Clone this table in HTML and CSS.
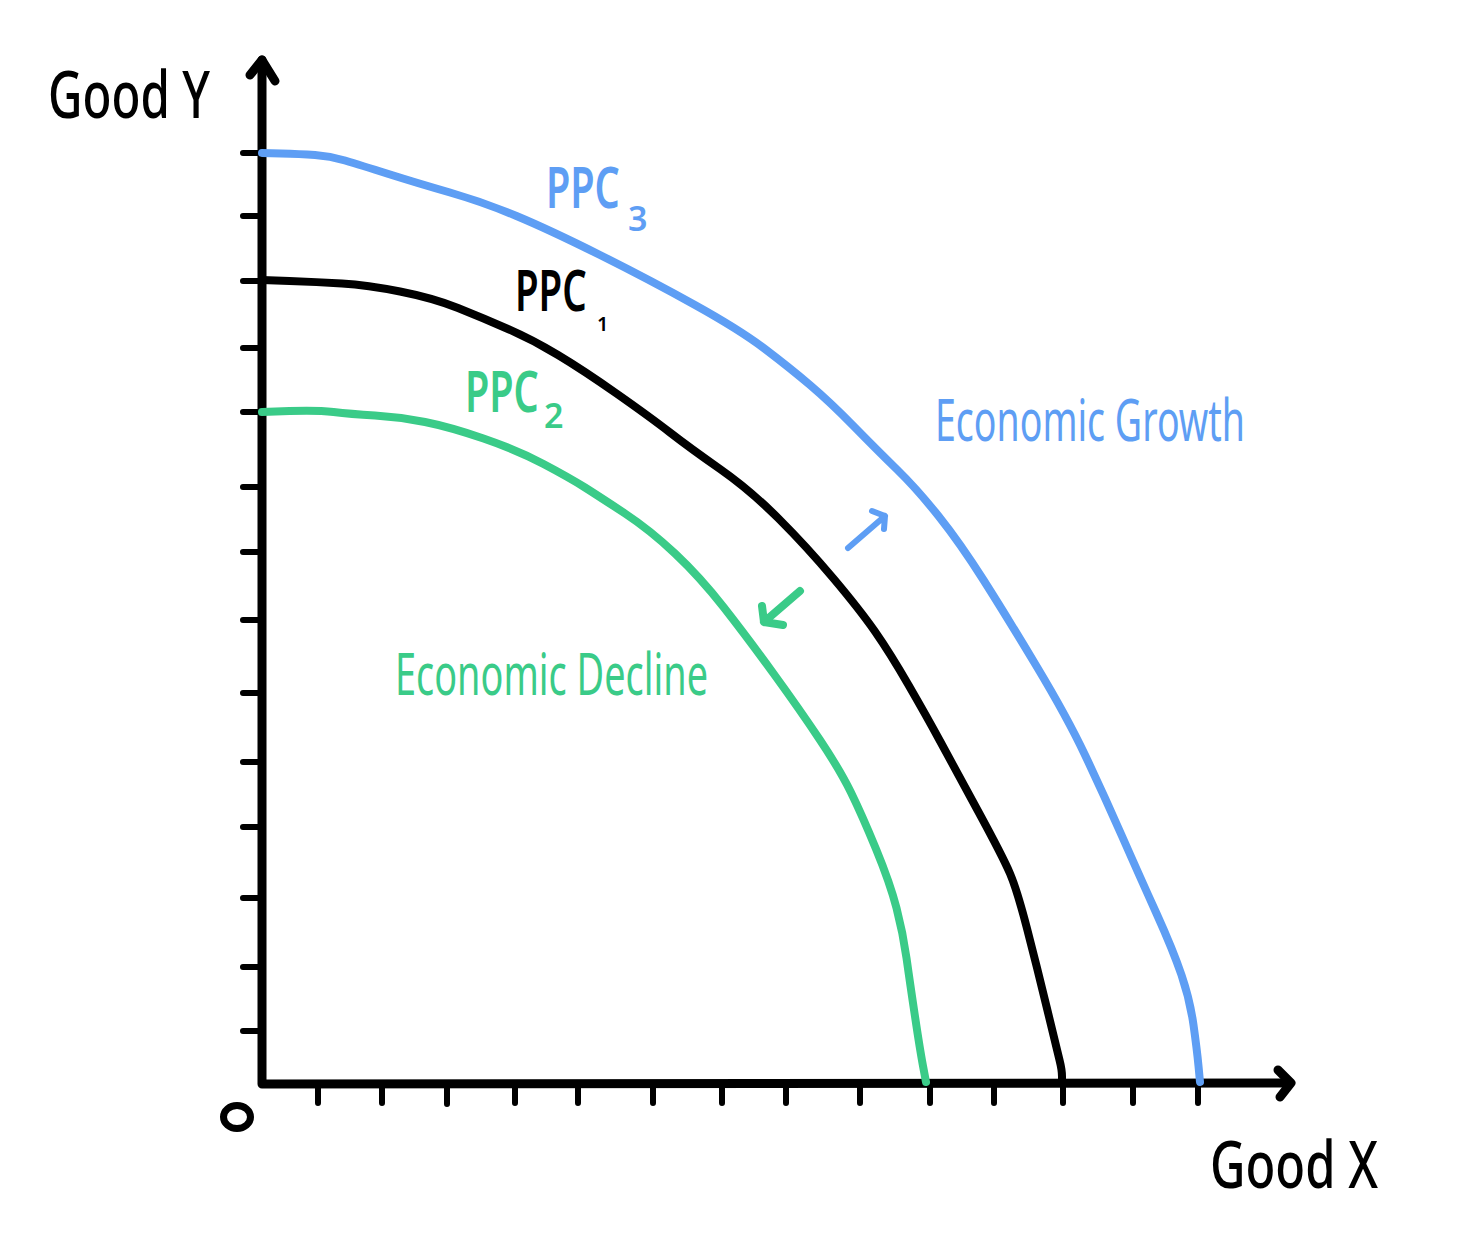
FILE: index.html
```html
<!DOCTYPE html>
<html lang="en">
<head>
<meta charset="utf-8">
<title>Production Possibility Curve</title>
<link rel="stylesheet" href="styles.css">
</head>
<body>
<main class="page">
<svg class="chart" width="1463" height="1253" viewBox="0 0 1463 1253" xmlns="http://www.w3.org/2000/svg">
  <!-- axes -->
  <g class="axis">
    <path d="M262 60 L262 1084 L1290 1083"/>
    <path d="M250 75 L262 60 L275 81"/>
    <path d="M1278 1070 L1291 1083 L1280 1097"/>
  </g>
  <g class="ticks">
    <path d="M243 153 H262 M243 216 H262 M243 281 H262 M243 348 H262 M243 412 H262 M243 487 H262 M243 552 H262 M243 620 H262 M243 693 H262 M243 762 H262 M243 827 H262 M243 898 H262 M243 967 H262 M243 1031 H262"/>
    <path d="M318 1084 V1103 M382 1084 V1103 M447 1084 V1104 M515 1084 V1103 M578 1084 V1103 M653 1084 V1103 M722 1084 V1103 M786 1084 V1103 M860 1084 V1103 M930 1084 V1103 M994 1084 V1103 M1063 1084 V1103 M1133 1084 V1103 M1198 1084 V1103"/>
  </g>
  <ellipse class="origin" cx="237" cy="1117" rx="13.5" ry="11.5"/>

  <!-- curves -->
  <path class="curve blue" d="M262 153 L281 153.5 Q300 154 315 155 Q330 156 345 160.5 Q360 165 388.5 174 Q417 183 450 192.5 Q483 202 516.5 216 Q550 230 600 255 Q650 280 695 305 Q740 330 765 349 Q790 368 810 385 Q830 402 853.5 426 Q877 450 897 469.5 Q917 489 938.5 516 Q960 543 983.5 580 Q1007 617 1037 667 Q1067 717 1085 755 Q1103 793 1121.5 835 Q1140 877 1156.5 913.5 Q1173 950 1181.5 975 Q1190 1000 1193.5 1025 Q1197 1050 1198.5 1066 L1200 1082"/>
  <path class="curve black" d="M262 280 L289.5 281 Q317 282 342 283.5 Q367 285 400 291.5 Q433 298 458 308 Q483 318 508 329 Q533 340 558 355 Q583 370 616.5 393.5 Q650 417 670 432.5 Q690 448 720 469 Q750 490 778.5 518.5 Q807 547 833.5 578.5 Q860 610 875 631.5 Q890 653 908.5 685 Q927 717 940 741 Q953 765 978 811 Q1003 857 1010 873.5 Q1017 890 1027 928.5 Q1037 967 1047 1008.5 Q1057 1050 1059.5 1060 Q1062 1070 1062 1076.5 L1062 1083"/>
  <path class="curve green" d="M262 412 L289.5 411 Q317 410 333.5 412 Q350 414 375 415.5 Q400 417 425 422 Q450 427 483.5 438.5 Q517 450 543.5 464 Q570 478 585 487.5 Q600 497 625 513.5 Q650 530 675 553.5 Q700 577 723.5 607 Q747 637 773.5 673.5 Q800 710 820 740 Q840 770 851 792.5 Q862 815 876 849 Q890 883 896.5 908 Q903 933 906.5 958 Q910 983 915 1016.5 Q920 1050 923 1066 L926 1082"/>

  <!-- shift arrows -->
  <path class="shift blue" d="M848 548 L885 516 M872 511 L885 516 L884 529"/>
  <path class="shift green" d="M800 591 L764 622 M762 606 L764 622 L783 625"/>

  <!-- labels -->
  <text class="label black big" x="48" y="118" textLength="162" lengthAdjust="spacingAndGlyphs">Good Y</text>
  <text class="label black big" x="1210" y="1188" textLength="168" lengthAdjust="spacingAndGlyphs">Good X</text>

  <text class="label black ppc" transform="translate(515 311) scale(0.69 1)" x="0" y="0" textLength="104" lengthAdjust="spacingAndGlyphs">PPC</text>
  <text class="label black sub-small" x="597" y="331">1</text>

  <text class="label blue ppc" transform="translate(546 208) scale(0.69 1)" x="0" y="0" textLength="107" lengthAdjust="spacingAndGlyphs">PPC</text>
  <text class="label blue sub" x="628" y="231">3</text>

  <text class="label green ppc" transform="translate(465 412) scale(0.69 1)" x="0" y="0" textLength="107" lengthAdjust="spacingAndGlyphs">PPC</text>
  <text class="label green sub" x="544" y="428">2</text>

  <text class="label blue phrase" x="935" y="441" textLength="310" lengthAdjust="spacingAndGlyphs">Economic Growth</text>
  <text class="label green phrase" x="395" y="695" textLength="313" lengthAdjust="spacingAndGlyphs">Economic Decline</text>
</svg>
</main>
</body>
</html>
```
FILE: styles.css
```css
html, body {
  margin: 0;
  padding: 0;
  background: #ffffff;
}

.page {
  width: 1463px;
  height: 1253px;
  overflow: hidden;
}

.chart {
  display: block;
}

.axis path,
.ticks path {
  fill: none;
  stroke: #000000;
  stroke-linecap: round;
  stroke-linejoin: round;
}

.axis path {
  stroke-width: 9;
}

.ticks path {
  stroke-width: 6;
}

.origin {
  fill: none;
  stroke: #000000;
  stroke-width: 7;
}

.curve {
  fill: none;
  stroke-width: 8;
  stroke-linecap: round;
  stroke-linejoin: round;
}

.curve.blue { stroke: #5e9ef4; }
.curve.black { stroke: #000000; }
.curve.green { stroke: #3acb88; }

.shift {
  fill: none;
  stroke-linecap: round;
  stroke-linejoin: round;
}

.shift.blue { stroke: #5e9ef4; stroke-width: 6; }
.shift.green { stroke: #3acb88; stroke-width: 8; }

.label {
  font-family: "Noto Sans", "DejaVu Sans", sans-serif;
  font-weight: 500;
}

.label.black { fill: #000000; }
.label.blue { fill: #5e9ef4; }
.label.green { fill: #3acb88; }

.big {
  font-size: 66px;
}

.ppc {
  font-size: 57px;
  font-weight: 600;
}

.sub {
  font-size: 34px;
  font-weight: 600;
}

.sub-small {
  font-size: 20px;
  font-weight: 600;
}

.phrase {
  font-size: 58px;
  font-weight: 400;
}
```
